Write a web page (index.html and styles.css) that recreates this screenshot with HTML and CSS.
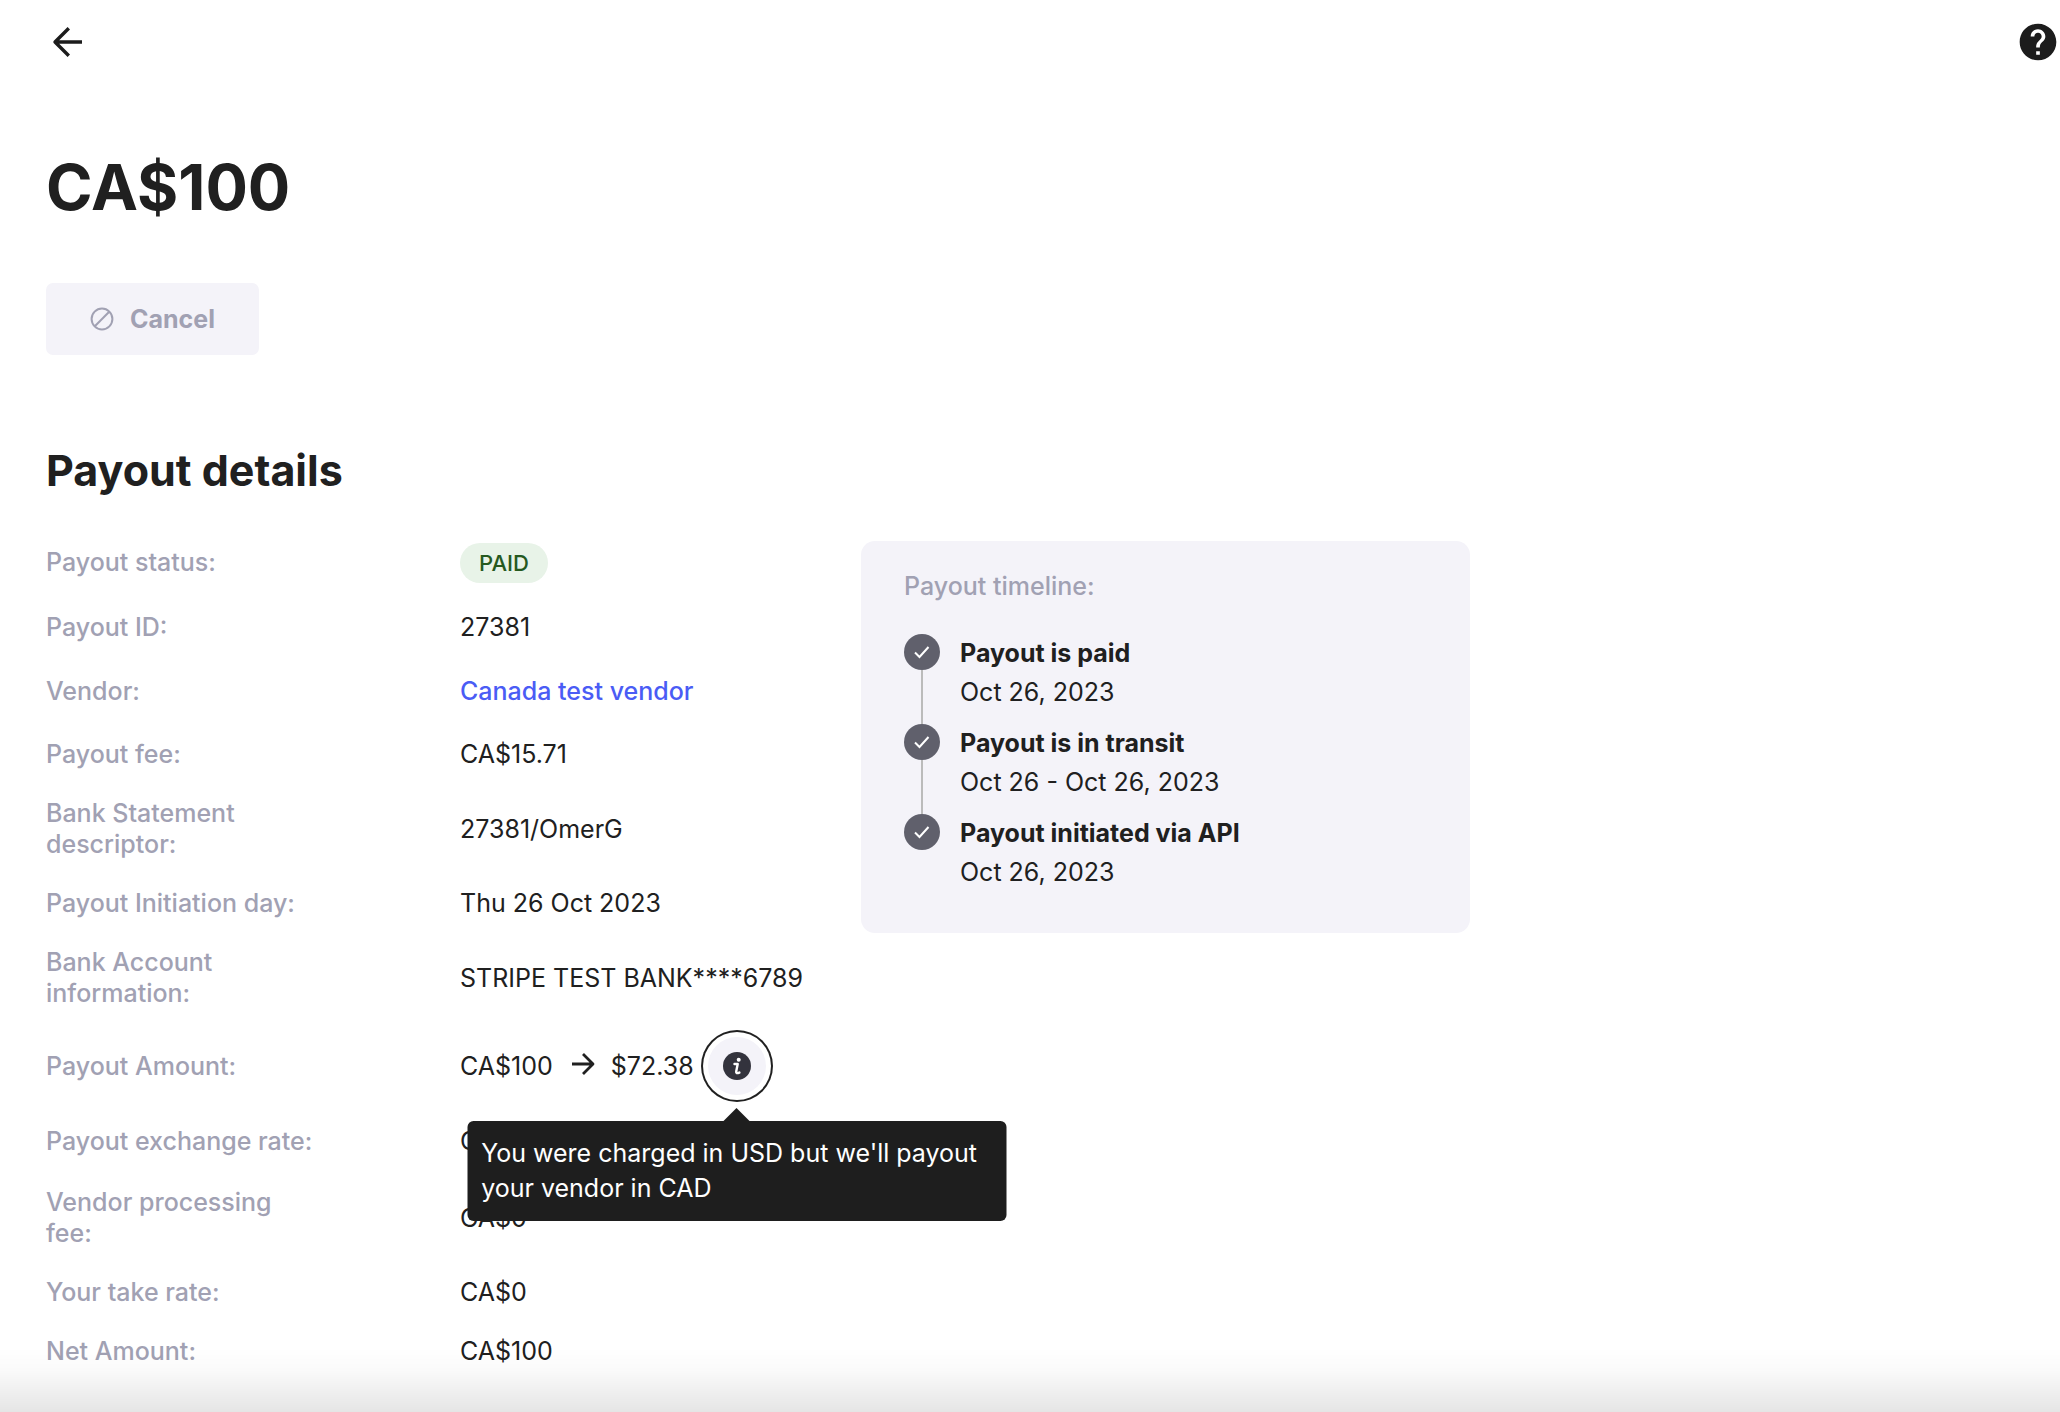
FILE: index.html
```html
<!DOCTYPE html>
<html lang="en">
<head>
<meta charset="utf-8">
<title>Payout CA$100</title>
<link rel="stylesheet" href="styles.css">
</head>
<body>
<div class="page">
  <header class="topbar">
    <button class="icon-button" type="button" aria-label="Back">
      <svg width="44" height="44" viewBox="0 0 44 44" fill="none" stroke="currentColor" stroke-width="3.4"><path d="M22.800 8.200 9 22l13.800 13.800M10 22h26" stroke-linejoin="round"/></svg>
    </button>
    <button class="icon-button" type="button" aria-label="Help">
      <svg width="44" height="44" viewBox="0 0 24 24" fill="currentColor"><path d="M12 2C6.480 2 2 6.480 2 12s4.480 10 10 10 10-4.480 10-10S17.520 2 12 2zm1 17h-2v-2h2v2zm2.070-7.750-.9.920C13.450 12.900 13 13.500 13 15h-2v-.5c0-1.100.450-2.100 1.170-2.830l1.240-1.260c.370-.360.590-.860.590-1.410 0-1.100-.9-2-2-2s-2 .9-2 2H8c0-2.210 1.790-4 4-4s4 1.790 4 4c0 .880-.360 1.680-.930 2.250z"/></svg>
    </button>
  </header>

  <main class="content">
    <h1 class="amount">CA$100</h1>
    <button class="cancel" type="button" disabled>
      <svg width="24" height="24" viewBox="0 0 24 24" fill="none" stroke="currentColor" stroke-width="2"><circle cx="12" cy="12" r="10.400"/><path d="M4.800 19.200 19.200 4.800"/></svg>
      Cancel
    </button>

    <h2 class="section-title">Payout details</h2>
    <div class="columns">
      <dl class="details">
        <div class="row row-status"><dt>Payout status:</dt><dd><span class="badge">PAID</span></dd></div>
        <div class="row"><dt>Payout ID:</dt><dd>27381</dd></div>
        <div class="row row-link"><dt>Vendor:</dt><dd><a class="link" href="#vendor">Canada test vendor</a></dd></div>
        <div class="row"><dt>Payout fee:</dt><dd>CA$15.71</dd></div>
        <div class="row"><dt>Bank Statement descriptor:</dt><dd>27381/OmerG</dd></div>
        <div class="row"><dt>Payout Initiation day:</dt><dd>Thu 26 Oct 2023</dd></div>
        <div class="row"><dt>Bank Account information:</dt><dd>STRIPE TEST BANK****6789</dd></div>
        <div class="row">
          <dt>Payout Amount:</dt>
          <dd class="conversion">
            <span>CA$100</span>
            <svg class="to" width="24" height="28" viewBox="0 0 24 28" fill="none" stroke="currentColor" stroke-width="2.800"><path d="M1 12h20M12 2l10 10-10 10" stroke-linejoin="round"/></svg>
            <span>$72.38</span>
            <span class="info-wrap">
              <button class="info" type="button" aria-label="Currency information" aria-describedby="currency-tip">
                <svg width="28" height="28" viewBox="0 0 28 28"><circle cx="14" cy="14" r="14" fill="#33333d"/><circle cx="15.700" cy="7.800" r="2" fill="#fff"/><path d="M11.500 12h3.200l-1.500 7.600c-.3 1.600.6 1.900 3.200 1" fill="none" stroke="#fff" stroke-width="2.400" stroke-linecap="round" stroke-linejoin="round"/></svg>
              </button>
              <span class="tooltip" id="currency-tip" role="tooltip">You were charged in USD but we'll payout your vendor in CAD</span>
            </span>
          </dd>
        </div>
        <div class="row row-rate"><dt>Payout exchange rate:</dt><dd>CA$1 = $0.7238</dd></div>
        <div class="row"><dt>Vendor processing fee:</dt><dd>CA$0</dd></div>
        <div class="row"><dt>Your take rate:</dt><dd>CA$0</dd></div>
        <div class="row"><dt>Net Amount:</dt><dd>CA$100</dd></div>
      </dl>

      <section class="timeline">
        <h3 class="timeline-title">Payout timeline:</h3>
        <ol class="steps">
          <li class="step">
            <span class="dot"><svg width="18" height="18" viewBox="0 0 18 18" fill="none" stroke="#fff" stroke-width="2"><path d="m2 9.500 4.500 4.500L15.500 4"/></svg></span>
            <div><p class="step-name">Payout is paid</p><p class="step-date">Oct 26, 2023</p></div>
          </li>
          <li class="step">
            <span class="dot"><svg width="18" height="18" viewBox="0 0 18 18" fill="none" stroke="#fff" stroke-width="2"><path d="m2 9.500 4.500 4.500L15.500 4"/></svg></span>
            <div><p class="step-name">Payout is in transit</p><p class="step-date">Oct 26 - Oct 26, 2023</p></div>
          </li>
          <li class="step">
            <span class="dot"><svg width="18" height="18" viewBox="0 0 18 18" fill="none" stroke="#fff" stroke-width="2"><path d="m2 9.500 4.500 4.500L15.500 4"/></svg></span>
            <div><p class="step-name">Payout initiated via API</p><p class="step-date">Oct 26, 2023</p></div>
          </li>
        </ol>
      </section>
    </div>
  </main>
</div>
<div class="bottom-fade"></div>
</body>
</html>
```

FILE: styles.css
```css
* { box-sizing: border-box; }

body {
  margin: 0;
  background: #fff;
  color: #202020;
  font-family: Inter, "Liberation Sans", sans-serif;
  font-size: 25px;
  line-height: 31px;
}

h1, h2, h3, p, dl, dd, ol { margin: 0; padding: 0; }

button { font: inherit; border: 0; padding: 0; }

svg { display: block; flex: none; }

.topbar {
  display: flex;
  justify-content: space-between;
  padding: 20px 0 0 46px;
}

.icon-button { background: none; color: #1c1c1c; }

.content { padding: 85px 46px 0; }

.amount { font-size: 63px; line-height: 76px; font-weight: 700; }

.cancel {
  display: flex;
  align-items: center;
  justify-content: center;
  gap: 16px;
  width: 213px;
  height: 72px;
  margin-top: 58px;
  border-radius: 7px;
  background: #f4f3f9;
  color: #a1a1b3;
  font-weight: 700;
}

.section-title {
  margin-top: 88px;
  font-size: 43px;
  line-height: 54px;
  font-weight: 700;
}

.columns {
  display: grid;
  grid-template-columns: minmax(0, 815px) minmax(0, 609px);
  align-items: start;
  margin-top: 44px;
}

.details { display: flex; flex-direction: column; gap: 28px; }

.row {
  display: grid;
  grid-template-columns: 276px 1fr;
  column-gap: 138px;
  align-items: center;
}

.row-status { min-height: 43px; }
.row-link { min-height: 40px; }
.row-rate { min-height: 36px; }

dt { color: #a1a1b3; font-weight: 500; }

.badge {
  display: inline-block;
  padding: 0 19px;
  border-radius: 20px;
  background: #e8f3e8;
  color: #26591f;
  font-size: 22px;
  line-height: 40px;
  font-weight: 500;
  vertical-align: top;
}

.link { color: #4a5cf5; font-weight: 500; text-decoration: none; }

.conversion { display: flex; align-items: center; }

.to { margin: 0 16px 0 18px; }

.info-wrap { position: relative; margin-left: 14px; }

.info {
  display: grid;
  place-items: center;
  width: 58px;
  height: 58px;
  border-radius: 50%;
  background: #f4f3f9;
  box-shadow: 0 0 0 5px #fff, 0 0 0 7px #202020;
}

.tooltip {
  position: absolute;
  z-index: 1;
  top: 84px;
  left: 50%;
  width: 539px;
  padding: 15px 14px;
  border-radius: 6px;
  background: #1e1e1e;
  color: #fff;
  line-height: 35px;
  transform: translateX(-50%);
}

.tooltip::before {
  content: "";
  position: absolute;
  bottom: 100%;
  left: 50%;
  border: solid transparent;
  border-width: 0 13px 13px;
  border-bottom-color: #1e1e1e;
  transform: translateX(-50%);
}

.timeline {
  padding: 30px 43px 29px;
  border-radius: 14px;
  background: #f4f3f9;
}

.timeline-title {
  color: #a1a1b3;
  font-size: 25px;
  line-height: 31px;
  font-weight: 500;
}

.steps { margin-top: 32px; list-style: none; }

.step {
  position: relative;
  display: flex;
  gap: 20px;
  min-height: 90px;
}

.step:not(:last-child)::before {
  content: "";
  position: absolute;
  top: 36px;
  bottom: 0;
  left: 17px;
  width: 2px;
  background: #bbb;
}

.dot {
  display: grid;
  place-items: center;
  flex: none;
  width: 36px;
  height: 36px;
  border-radius: 50%;
  background: #60606c;
}

.step-name, .step-date { line-height: 39px; }
.step-name { font-weight: 700; }

.bottom-fade {
  position: fixed;
  right: 0;
  bottom: 0;
  left: 0;
  height: 64px;
  background: linear-gradient(rgba(0, 0, 0, 0), rgba(0, 0, 0, 0.02) 35%, rgba(0, 0, 0, 0.1));
  pointer-events: none;
}
```
